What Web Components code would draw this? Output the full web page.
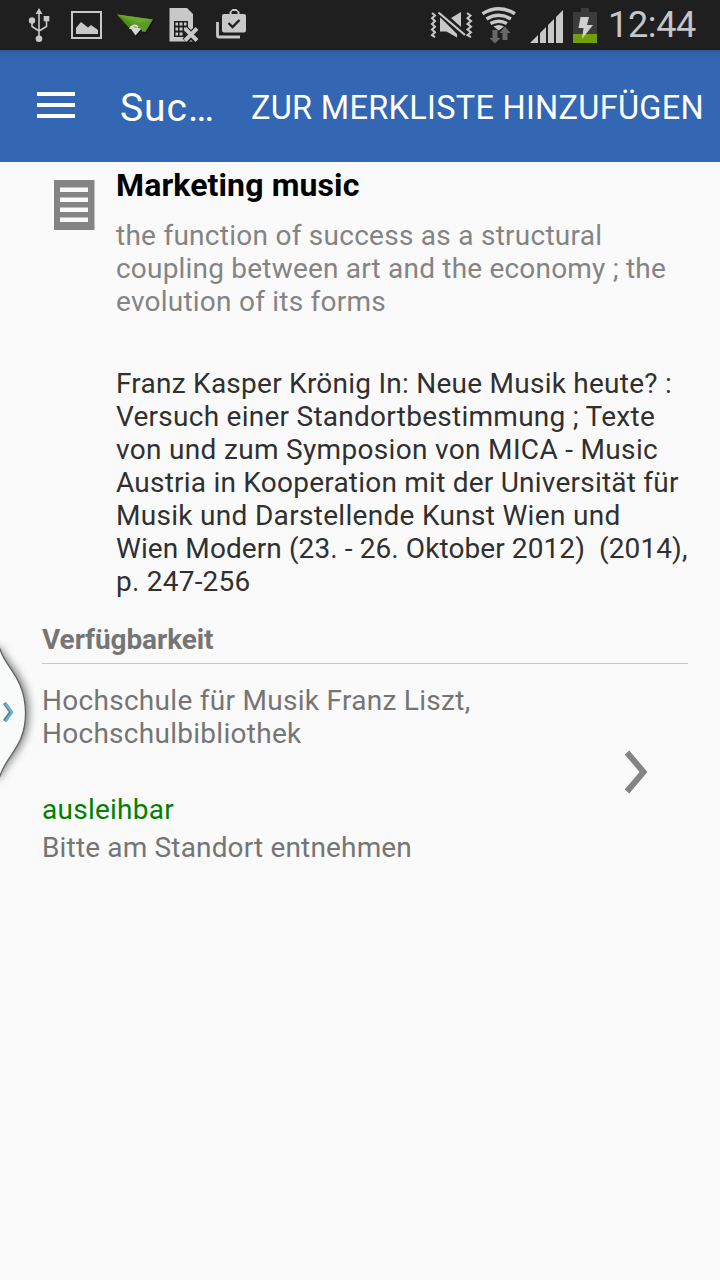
<!DOCTYPE html>
<html lang="de"><head><meta charset="utf-8"><title>Suche</title>
<style>html,body{margin:0;height:100%;overflow:hidden;background:#fafafa;font-family:Roboto,"Noto Sans",sans-serif}</style></head>
<body><catalog-app></catalog-app>
<script>
function define(name, html, after) {
  const t = document.createElement('template');
  t.innerHTML = html;
  customElements.define(name, class extends HTMLElement {
    connectedCallback() {
      if (this.shadowRoot) return;
      this.attachShadow({mode: 'open'}).append(t.content.cloneNode(true));
      if (after) after(this);
    }
  });
}

/* One line of text, tracked so that it spans the width given in "w". */
define('text-line', `<style>:host{display:block;white-space:pre}span{display:inline-block}</style><span></span>`, el => {
  const s = el.shadowRoot.querySelector('span');
  s.textContent = el.getAttribute('text');
  const w = parseFloat(el.getAttribute('w'));
  const natural = s.getBoundingClientRect().width;
  if (w && natural) s.style.letterSpacing = ((w - natural) / s.textContent.length).toFixed(4) + 'px';
});

define('status-bar', `<style>
:host{display:flex;height:50px;background:#1f1f1f;position:relative}
svg{display:block;flex:none}
text-line{font-size:36px;line-height:50px;color:#c6c6c6;margin-left:6px}
</style>
<svg width="260" height="50" viewBox="0 0 260 50" fill="#c8c8c8">
  <g stroke="#c8c8c8" stroke-width="1.6" fill="none"><path d="M39 12V37M32 21V26.5L39 31M46.5 19V26.5L39 31"/></g>
  <path d="M39 8l3.4 6h-6.8z"/><circle cx="32" cy="20.5" r="3.2"/><path d="M43.7 16h5.6v5.3h-5.6z"/><circle cx="39" cy="38.7" r="3.3"/>
  <path fill-rule="evenodd" d="M71 11h31v28H71zM73 13v24h27V13z"/><path d="M76 34V28l5-6 7 5.5 3-2.5 7 5v4z"/>
  <path d="M153 20l1 1.500-8.500 12.500-4-3-5 6-2-2z" fill="#111"/>
  <path d="M129 26l6.500 9.500 6-7z" fill="#d2d8ce"/><path d="M141 29l1.500 3 2-1z" fill="#7788bb"/>
  <path d="M117 14.500l36 5-8 13-4.500-4-4-2-7.500 1z" fill="#5b9b1f"/><path d="M117 14.500l12.500 13 4-2.500z" fill="#4d8b19"/><path d="M117 14.500l36 5-14 3.500z" fill="#68a82b"/>
  <path d="M130 29c1.500-4 6-4.500 8-1.500M134 29v3" stroke="#d8ddd4" stroke-width="2" fill="none"/>
  <path d="M169.500 8H187l6 6v27.500h-23.500z"/>
  <path fill-rule="evenodd" fill="#1f1f1f" d="M174 21h14v16h-14zM175.500 22.500v3h2.500v-3zm4 0v3h3v-3zm4.500 0v3h2.500v-3zM175.500 27.500v3h2.500v-3zm4 0v3h3v-3zm4.500 0v3h2.500v-3zM175.500 32.500v3h2.500v-3zm4 0v3h3v-3z"/>
  <path d="M185 29l12 12M197 29l-12 12" stroke="#1f1f1f" stroke-width="7"/><path d="M185 28.500l12 12M197 28.500L185 40.500" stroke="#c8c8c8" stroke-width="3.900"/>
  <path fill-rule="evenodd" d="M224 14h5.500v-2l3-3h4l3 3v2h4.500q2 0 2 2v14.500q0 2-2 2h-20q-2 0-2-2V16q0-2 2-2zM231.500 14h6v-2l-1-1h-4l-1 1z"/>
  <path d="M228.500 23l4 4 7-7" stroke="#1f1f1f" stroke-width="2.4" fill="none"/>
  <path d="M217.500 22v13.500q0 1.500 1.500 1.500H240" stroke="#c8c8c8" stroke-width="2.800" fill="none"/>
</svg>
<svg width="342" height="50" viewBox="260 0 342 50" fill="#c8c8c8">
  <path d="M440 17v14.500h6.500l10.500 6V34zM451 18l10-6v15z"/>
  <path d="M438.500 12.500l27 23" stroke="#1f1f1f" stroke-width="5"/><path d="M438.500 12.500l26.500 22.500" stroke="#c8c8c8" stroke-width="2.200"/>
  <path d="M432 13l3 2.500-3 2.800 3 2.800-3 2.800 3 2.800-3 2.800 3 2.800-3 2.800 3 2M467 13l3.500 2.500-3 2.800 3.500 2.800-3.500 2.800 3.500 2.800-3.500 2.800 3.500 2.800-3.500 2.800 3.500 2" fill="none" stroke="#c8c8c8" stroke-width="2"/>
  <g fill="none" stroke="#c8c8c8" stroke-width="3.500"><path d="M482.500 13.700q16.200-9.700 32.400 0M486.500 18.900q12.200-7.200 24.400 0M490.500 23.600q8.200-4.700 16.400 0"/></g>
  <path d="M493.500 26.500q5.200-3 10.500 0l-5.200 4z"/>
  <path fill="#686868" d="M492.500 30h5v8h3l-5.500 5.500-5.500-5.500h3zM502.500 40v-7h-3l5.500-6.500 5.500 6.500h-3v7z"/>
  <path d="M530 43l8-8v8zM540 33l6-6v16h-6zM548 25l6-6v24h-6zM556 17l7-7v33h-7z"/>
  <path fill="#3b3b3b" d="M581 8h8v4h8v22h-24V12h8z"/><path fill="#729f05" d="M573 34h24v9h-24z"/>
  <path fill="#d0d0d0" d="M580.500 17h8.500l-2 8h6l-11 14 1.500-11h-5z"/>
</svg><text-line text="12:44" w="88"></text-line>`);

define('app-bar', `<style>
:host{display:flex;align-items:center;height:112px;box-sizing:border-box;background:#3366b3;color:#fff;padding-left:37px}
svg{display:block;margin:0 45px 2px 0}
.t{font-size:39px;line-height:46px;width:131px;margin-top:4px}
.a{font-size:32.500px;line-height:38px;margin-top:3px}
</style><svg width="38" height="27"><path d="M0 0h38v4H0zM0 11h38v4H0zM0 22h38v4H0z" fill="#fff"/></svg>
<text-line class="t" text="Suc…" w="95"></text-line><text-line class="a" text="ZUR MERKLISTE HINZUFÜGEN" w="453"></text-line>`);

define('record-card', `<style>
:host{display:flex;padding:4px 16px 0 53px;font-size:28px;line-height:33px}
svg{display:block;width:63px;flex:none;margin-top:14px}
.h{font-size:32px;line-height:38px;font-weight:700;color:#000}
.s{color:#848484;margin-top:15px}.d{color:#303030;margin-top:49px}
</style><svg width="63" height="51" viewBox="0 0 63 51"><path d="M1 0h40.500v50H1z" fill="#848484"/><path d="M7 7.500h28v4.500H7zm0 10h28v4.500H7zm0 10h28v4.500H7zm0 10h28v4.500H7z" fill="#fafafa"/></svg>
<div><text-line class="h" text="Marketing music" w="243.500"></text-line>
<div class="s"><text-line text="the function of success as a structural" w="486.300"></text-line><text-line text="coupling between art and the economy ; the" w="550"></text-line><text-line text="evolution of its forms" w="270"></text-line></div>
<div class="d"><text-line text="Franz Kasper Krönig In: Neue Musik heute? :" w="556"></text-line><text-line text="Versuch einer Standortbestimmung ; Texte" w="539"></text-line><text-line text="von und zum Symposion von MICA - Music" w="542"></text-line><text-line text="Austria in Kooperation mit der Universität für" w="562.700"></text-line><text-line text="Musik und Darstellende Kunst Wien und" w="504.500"></text-line><text-line text="Wien Modern (23. - 26. Oktober 2012)  (2014)," w="571.500"></text-line><text-line text="p. 247-256" w="134.500"></text-line></div></div>`);

define('availability-list', `<style>
:host{display:block;margin:25px 32px 0 42px;font-size:28px;line-height:33px;color:#757575}
.h{font-weight:700;height:40px;border-bottom:1px solid #c8c8c8}
.row{display:flex;justify-content:space-between;align-items:center;margin-top:20px;padding-right:40px}
.ok{color:#008000;margin-top:43px}.note{margin-top:5px}svg{display:block;margin-bottom:5px}
</style><text-line class="h" text="Verfügbarkeit" w="171.500"></text-line>
<div class="row"><div><text-line text="Hochschule für Musik Franz Liszt," w="428.500"></text-line><text-line text="Hochschulbibliothek" w="259.500"></text-line><text-line class="ok" text="ausleihbar" w="132"></text-line><text-line class="note" text="Bitte am Standort entnehmen" w="370"></text-line></div>
<svg width="24" height="44"><path d="M3 2.500L19.500 22 3 41.500" fill="none" stroke="#848484" stroke-width="6"/></svg></div>`);

define('edge-handle', `<style>:host{display:block;position:absolute;left:0;top:630px;pointer-events:none}svg{display:block}</style>
<svg width="50" height="170" viewBox="0 630 50 170"><defs><filter id="b" x="-50%" y="-20%" width="200%" height="140%"><feGaussianBlur stdDeviation="5"/></filter></defs>
<path d="M-12 648H0C5 664 28 676 28 712S7 757 0 777H-12z" fill="#000" opacity=".6" filter="url(#b)"/>
<path d="M-2 646L0 649C4 666 25 677 25.500 712S6 755 0 776L-2 779z" fill="#f9fbfb" stroke="#646464" stroke-width="1.300"/>
<path d="M4.500 703l6.500 9-6.500 9" fill="none" stroke="#487f98" stroke-width="3.600"/><path d="M5.500 703.500l6.500 9-6.500 9" fill="none" stroke="#74b3d0" stroke-width="2.300"/></svg>`);

define('catalog-app', `<style>:host{display:flex;flex-direction:column;width:720px;height:1280px;position:relative;background:#fafafa;overflow:hidden}
status-bar,app-bar{flex:none}
app-bar{background:linear-gradient(#2b5798,#3061aa 3px,#3366b3 12px)}</style>
<status-bar></status-bar><app-bar></app-bar><record-card></record-card><availability-list></availability-list><edge-handle></edge-handle>`);
</script></body></html>
